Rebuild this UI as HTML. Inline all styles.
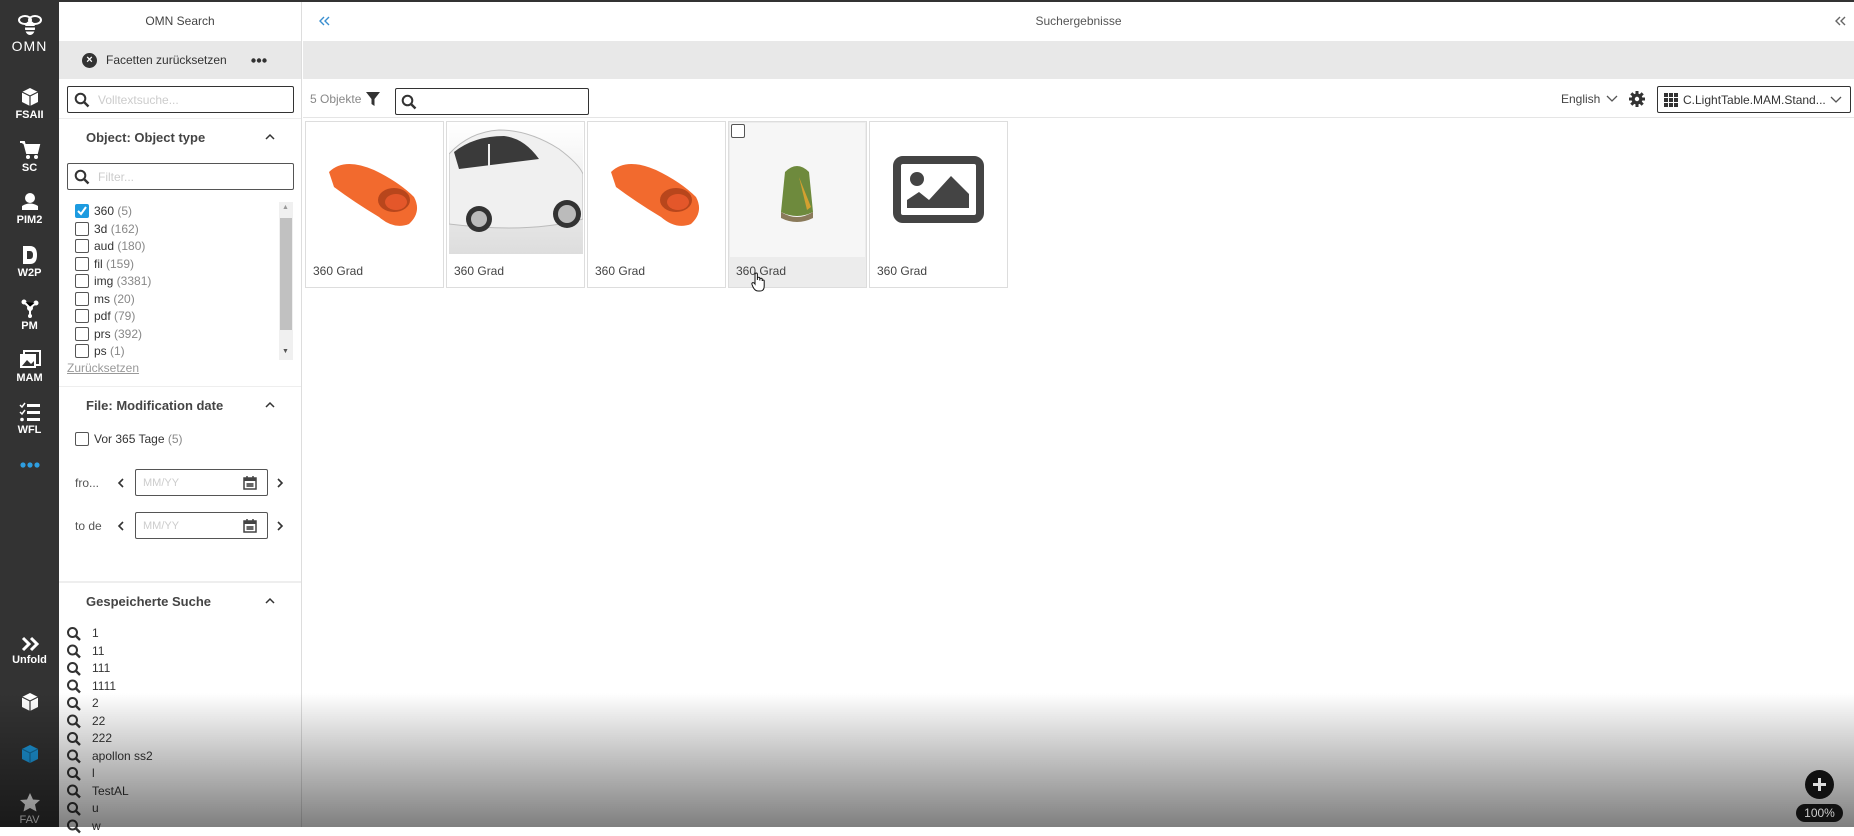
<!DOCTYPE html>
<html><head><meta charset="utf-8"><style>
*{box-sizing:border-box;margin:0;padding:0}
body{width:1854px;height:827px;overflow:hidden;background:#fff;font-family:"Liberation Sans",sans-serif;font-size:13px;color:#333;position:relative}
.abs{position:absolute}
#top{left:0;top:0;width:1854px;height:2px;background:#333}
#side{left:0;top:0;width:59px;height:827px;background:#333;color:#fff;text-align:center;font-weight:bold;font-size:11px}
.nav{position:absolute;left:0;width:59px;text-align:center}
.nav svg{display:block;margin:0 auto 2px}
#panel{left:59px;top:2px;width:243px;height:825px;border-right:1px solid #ddd}
.gray{background:#e8e8e8}
.box{border:1px solid #333;border-radius:2px;background:#fff}
.ph{color:#ccc}
.cb{display:inline-block;width:14px;height:14px;border:1px solid #555;border-radius:2px;vertical-align:-3px;margin-right:5px;background:#fff;overflow:hidden;line-height:0}
.cnt{color:#888}
.hd{font-weight:bold;font-size:13px;color:#444}
.tile{position:absolute;top:121px;width:139px;height:167px;border:1px solid #ddd;background:#fff}
.tile .lb{position:absolute;left:7px;top:142px;font-size:12px;color:#444}
</style></head><body>
<div id="top" class="abs"></div>
<div id="side" class="abs">
 <div class="nav" style="top:12px"><svg width="26" height="26" viewBox="0 0 26 26"><ellipse cx="8" cy="8" rx="6" ry="4" fill="none" stroke="#fff" stroke-width="2"/><ellipse cx="18" cy="8" rx="6" ry="4" fill="none" stroke="#fff" stroke-width="2"/><ellipse cx="13" cy="16" rx="5" ry="7" fill="#fff"/><rect x="8" y="14" width="10" height="1.5" fill="#333"/><rect x="8" y="18" width="10" height="1.5" fill="#333"/></svg><div style="font-size:14px;font-weight:normal;letter-spacing:1px;margin-top:-2px">OMN</div></div>
 <div class="nav" style="top:87px"><svg width="20" height="20" viewBox="0 0 20 20"><path d="M10 1 L18 5 L18 15 L10 19 L2 15 L2 5Z" fill="#fff"/><path d="M2 5 L10 9 L18 5 M10 9 V19" stroke="#333" stroke-width="1.2" fill="none"/></svg>FSAII</div>
 <div class="nav" style="top:140px"><svg width="22" height="20" viewBox="0 0 22 20"><path d="M1 2 H5 L8 13 H18 L20 5 H6" fill="#fff" stroke="#fff" stroke-width="2"/><circle cx="9" cy="17" r="2" fill="#fff"/><circle cx="17" cy="17" r="2" fill="#fff"/></svg>SC</div>
 <div class="nav" style="top:192px"><svg width="20" height="20" viewBox="0 0 20 20"><circle cx="10" cy="6" r="5" fill="#fff"/><path d="M2 14 Q10 9 18 14 L18 18 L2 18Z" fill="#fff"/></svg>PIM2</div>
 <div class="nav" style="top:245px"><svg width="18" height="20" viewBox="0 0 18 20"><path d="M2 1 H9 Q16 1 16 10 Q16 19 9 19 H2Z" fill="#fff"/><path d="M6 6 H9 Q12 6 12 10 Q12 14 9 14 H6Z" fill="#333"/></svg>W2P</div>
 <div class="nav" style="top:298px"><svg width="20" height="20" viewBox="0 0 20 20"><circle cx="10" cy="10" r="3" fill="#fff"/><circle cx="4" cy="4" r="2.5" fill="#fff"/><circle cx="16" cy="5" r="2.5" fill="#fff"/><circle cx="10" cy="18" r="2" fill="#fff"/><path d="M4 4L10 10L16 5M10 10V18" stroke="#fff" stroke-width="2"/></svg>PM</div>
 <div class="nav" style="top:350px"><svg width="22" height="20" viewBox="0 0 22 20"><rect x="1" y="4" width="16" height="14" fill="#fff"/><rect x="5" y="1" width="16" height="14" fill="none" stroke="#fff" stroke-width="2"/><path d="M3 16 L8 10 L12 14 L15 11 V16Z" fill="#333"/></svg>MAM</div>
 <div class="nav" style="top:402px"><svg width="22" height="20" viewBox="0 0 22 20"><path d="M1 3 L3 5 L6 1 M1 10 L3 12 L6 8" stroke="#fff" stroke-width="1.5" fill="none"/><rect x="8" y="2" width="13" height="3" fill="#fff"/><rect x="8" y="9" width="13" height="3" fill="#fff"/><rect x="8" y="16" width="13" height="3" fill="#fff"/><circle cx="3" cy="17.5" r="1.8" fill="#fff"/></svg>WFL</div>
 <svg class="abs" style="left:20px;top:462px" width="20" height="6"><circle cx="3" cy="3" r="2.6" fill="#2e9ee0"/><circle cx="10" cy="3" r="2.6" fill="#2e9ee0"/><circle cx="17" cy="3" r="2.6" fill="#2e9ee0"/></svg>
 <div class="nav" style="top:636px"><svg width="20" height="16" viewBox="0 0 20 16"><path d="M3 2L9 8L3 14M11 2L17 8L11 14" stroke="#fff" stroke-width="3" fill="none"/></svg>Unfold</div>
 <div class="nav" style="top:692px"><svg width="20" height="20" viewBox="0 0 20 20"><path d="M10 1 L18 5 L18 15 L10 19 L2 15 L2 5Z" fill="#fff"/><path d="M2 5 L10 9 L18 5 M10 9 V19" stroke="#333" stroke-width="1.2" fill="none"/></svg></div>
 <div class="nav" style="top:744px"><svg width="20" height="20" viewBox="0 0 20 20"><path d="M10 1 L18 5 L18 15 L10 19 L2 15 L2 5Z" fill="#1d9be0"/><path d="M2 5 L10 9 L18 5 M10 9 V19" stroke="#146fa0" stroke-width="1.2" fill="none"/></svg></div>
 <div class="nav" style="top:792px;font-weight:normal"><svg width="22" height="20" viewBox="0 0 22 20"><path d="M11 1 L14 7.5 L21 8 L16 12.5 L17.5 19.5 L11 16 L4.5 19.5 L6 12.5 L1 8 L8 7.5Z" fill="#fff"/></svg>FAV</div>
</div>

<div id="panel" class="abs">
 <div class="abs" style="left:0;top:0;width:242px;height:39px;text-align:center;line-height:39px;font-size:12px;color:#444">OMN Search</div>
 <div class="abs gray" style="left:0;top:39px;width:242px;height:38px"></div>
 <div class="abs" style="left:23px;top:51px;width:15px;height:15px;border-radius:50%;background:#333;color:#fff;font-size:11px;line-height:15px;text-align:center;font-weight:bold">×</div>
 <div class="abs" style="left:47px;top:51px;font-size:12px">Facetten zurücksetzen</div>
 <svg class="abs" style="left:192px;top:56px" width="16" height="5"><circle cx="2.5" cy="2.5" r="2.2" fill="#333"/><circle cx="8" cy="2.5" r="2.2" fill="#333"/><circle cx="13.5" cy="2.5" r="2.2" fill="#333"/></svg>
 <div class="abs box" style="left:8px;top:84px;width:227px;height:27px"><svg class="abs" style="left:6px;top:5px" width="16" height="16" viewBox="0 0 16 16"><circle cx="6.5" cy="6.5" r="4.8" fill="none" stroke="#333" stroke-width="2"/><path d="M10 10 L14.5 14.5" stroke="#333" stroke-width="2.4"/></svg><span class="abs ph" style="left:30px;top:6px;font-size:12px">Volltextsuche...</span></div>
 <div class="abs" style="left:0;top:116px;width:242px;height:1px;background:#eee"></div>
 <div class="abs hd" style="left:27px;top:128px">Object: Object type</div>
 <svg class="abs" style="left:206px;top:131px" width="10" height="7"><path d="M1 6L5 2L9 6" stroke="#333" stroke-width="1.5" fill="none"/></svg>
 <div class="abs box" style="left:8px;top:161px;width:227px;height:27px;border-color:#555"><svg class="abs" style="left:6px;top:5px" width="16" height="16" viewBox="0 0 16 16"><circle cx="6.5" cy="6.5" r="4.8" fill="none" stroke="#333" stroke-width="2"/><path d="M10 10 L14.5 14.5" stroke="#333" stroke-width="2.4"/></svg><span class="abs ph" style="left:30px;top:6px;font-size:12px">Filter...</span></div>
 <div class="abs" style="left:220px;top:200px;width:14px;height:158px;background:#f0f0f0"><div style="position:absolute;left:1px;top:16px;width:12px;height:112px;background:#c1c1c1"></div><div style="position:absolute;left:3px;top:2px;font-size:7px;color:#999">▲</div><div style="position:absolute;left:3px;top:146px;font-size:7px;color:#555">▼</div></div>
 <div class="abs" style="left:16px;top:201px;line-height:17.5px;font-size:12px">
  <div><span class="cb" style="background:#1d9be0;border-color:#1d9be0"><svg width="12" height="12"><path d="M2 6L5 9L10 2" stroke="#fff" stroke-width="2" fill="none"/></svg></span>360 <span class="cnt">(5)</span></div>
  <div><span class="cb"></span>3d <span class="cnt">(162)</span></div>
  <div><span class="cb"></span>aud <span class="cnt">(180)</span></div>
  <div><span class="cb"></span>fil <span class="cnt">(159)</span></div>
  <div><span class="cb"></span>img <span class="cnt">(3381)</span></div>
  <div><span class="cb"></span>ms <span class="cnt">(20)</span></div>
  <div><span class="cb"></span>pdf <span class="cnt">(79)</span></div>
  <div><span class="cb"></span>prs <span class="cnt">(392)</span></div>
  <div><span class="cb"></span>ps <span class="cnt">(1)</span></div>
 </div>
 <div class="abs" style="left:8px;top:359px;font-size:12px;color:#999;text-decoration:underline">Zurücksetzen</div>
 <div class="abs" style="left:0;top:384px;width:242px;height:1px;background:#eee"></div>
 <div class="abs hd" style="left:27px;top:396px">File: Modification date</div>
 <svg class="abs" style="left:206px;top:399px" width="10" height="7"><path d="M1 6L5 2L9 6" stroke="#333" stroke-width="1.5" fill="none"/></svg>
 <div class="abs" style="left:16px;top:430px;font-size:12px"><span class="cb"></span>Vor 365 Tage <span class="cnt">(5)</span></div>
 <div class="abs" style="left:16px;top:474px;font-size:12px;color:#555">fro...</div>
 <div class="abs" style="left:16px;top:517px;font-size:12px;color:#555">to de</div>
 <svg class="abs" style="left:58px;top:476px" width="7" height="10"><path d="M6 1L2 5L6 9" stroke="#333" stroke-width="1.6" fill="none"/></svg>
 <svg class="abs" style="left:58px;top:519px" width="7" height="10"><path d="M6 1L2 5L6 9" stroke="#333" stroke-width="1.6" fill="none"/></svg>
 <svg class="abs" style="left:218px;top:476px" width="7" height="10"><path d="M1 1L5 5L1 9" stroke="#333" stroke-width="1.6" fill="none"/></svg>
 <svg class="abs" style="left:218px;top:519px" width="7" height="10"><path d="M1 1L5 5L1 9" stroke="#333" stroke-width="1.6" fill="none"/></svg>
 <div class="abs box" style="left:76px;top:467px;width:133px;height:27px;border-color:#555"><span class="abs ph" style="left:7px;top:7px;font-size:11px">MM/YY</span><svg class="abs" style="left:107px;top:6px" width="14" height="14" viewBox="0 0 14 14"><rect x="1" y="2" width="12" height="11" fill="none" stroke="#444" stroke-width="1.5"/><rect x="1" y="2" width="12" height="3" fill="#444"/><path d="M4 0V3M10 0V3" stroke="#444" stroke-width="1.5"/><rect x="3.5" y="7" width="7" height="4" fill="#666"/></svg></div>
 <div class="abs box" style="left:76px;top:510px;width:133px;height:27px;border-color:#555"><span class="abs ph" style="left:7px;top:7px;font-size:11px">MM/YY</span><svg class="abs" style="left:107px;top:6px" width="14" height="14" viewBox="0 0 14 14"><rect x="1" y="2" width="12" height="11" fill="none" stroke="#444" stroke-width="1.5"/><rect x="1" y="2" width="12" height="3" fill="#444"/><path d="M4 0V3M10 0V3" stroke="#444" stroke-width="1.5"/><rect x="3.5" y="7" width="7" height="4" fill="#666"/></svg></div>
 <div class="abs" style="left:0;top:579px;width:242px;height:2px;background:#eee"></div>
 <div class="abs hd" style="left:27px;top:592px">Gespeicherte Suche</div>
 <svg class="abs" style="left:206px;top:595px" width="10" height="7"><path d="M1 6L5 2L9 6" stroke="#333" stroke-width="1.5" fill="none"/></svg>
</div>
<div class="abs" style="left:92px;top:625px;line-height:17.5px;font-size:12px;color:#333">
 <div>1</div><div>11</div><div>111</div><div>1111</div><div>2</div><div>22</div><div>222</div><div>apollon ss2</div><div>l</div><div>TestAL</div><div>u</div><div>w</div>
</div>
<svg class="abs" style="left:66px;top:626px" width="16" height="210">
 <defs><g id="mg"><circle cx="6.5" cy="6.5" r="4.5" fill="none" stroke="#333" stroke-width="2"/><path d="M10 10 L14 14" stroke="#333" stroke-width="2.4"/></g></defs>
 <use href="#mg" y="0"/><use href="#mg" y="17.5"/><use href="#mg" y="35"/><use href="#mg" y="52.5"/><use href="#mg" y="70"/><use href="#mg" y="87.5"/><use href="#mg" y="105"/><use href="#mg" y="122.5"/><use href="#mg" y="140"/><use href="#mg" y="157.5"/><use href="#mg" y="175"/><use href="#mg" y="192.5"/>
</svg>

<!-- main -->
<div class="abs" style="left:303px;top:2px;width:1551px;height:39px;text-align:center;line-height:39px;font-size:12px;color:#555">Suchergebnisse</div>
<svg class="abs" style="left:319px;top:16px" width="11" height="10"><path d="M5 1L1 5L5 9M10 1L6 5L10 9" stroke="#3a8fd0" stroke-width="1.4" fill="none"/></svg>
<svg class="abs" style="left:1835px;top:16px" width="11" height="10"><path d="M5 1L1 5L5 9M10 1L6 5L10 9" stroke="#666" stroke-width="1.4" fill="none"/></svg>
<div class="abs gray" style="left:303px;top:41px;width:1551px;height:38px"></div>
<div class="abs" style="left:310px;top:92px;font-size:12px;color:#888">5 Objekte</div>
<svg class="abs" style="left:366px;top:91px" width="14" height="16" viewBox="0 0 14 16"><path d="M0 1H14L8.5 8V15L5.5 13V8Z" fill="#333"/></svg>
<div class="abs box" style="left:395px;top:88px;width:194px;height:27px"><svg class="abs" style="left:5px;top:5px" width="16" height="16" viewBox="0 0 16 16"><circle cx="6.5" cy="6.5" r="4.8" fill="none" stroke="#333" stroke-width="2"/><path d="M10 10 L14.5 14.5" stroke="#333" stroke-width="2.4"/></svg></div>
<div class="abs" style="left:1561px;top:92px;font-size:12px;color:#444">English</div>
<svg class="abs" style="left:1606px;top:95px" width="12" height="8"><path d="M1 1L6 6L11 1" stroke="#555" fill="none" stroke-width="1.3"/></svg>
<svg class="abs" style="left:1629px;top:91px" width="16" height="16" viewBox="0 0 16 16"><circle cx="8" cy="8" r="5.5" fill="#333"/><g stroke="#333" stroke-width="3"><path d="M8 0V16M0 8H16M2.3 2.3L13.7 13.7M13.7 2.3L2.3 13.7"/></g><circle cx="8" cy="8" r="2.2" fill="#fff"/></svg>
<div class="abs box" style="left:1657px;top:86px;width:194px;height:27px"><svg class="abs" style="left:6px;top:6px" width="15" height="14"><g fill="#333"><rect x="0" y="0" width="4" height="4"/><rect x="5" y="0" width="4" height="4"/><rect x="10" y="0" width="4" height="4"/><rect x="0" y="5" width="4" height="4"/><rect x="5" y="5" width="4" height="4"/><rect x="10" y="5" width="4" height="4"/><rect x="0" y="10" width="4" height="4"/><rect x="5" y="10" width="4" height="4"/><rect x="10" y="10" width="4" height="4"/></g></svg><span class="abs" style="left:25px;top:6px;font-size:12px;color:#333">C.LightTable.MAM.Stand...</span><svg class="abs" style="left:172px;top:9px" width="12" height="8"><path d="M1 1L6 6L11 1" stroke="#555" fill="none" stroke-width="1.3"/></svg></div>
<div class="abs" style="left:303px;top:117px;width:1551px;height:1px;background:#e5e5e5"></div>

<div class="tile" style="left:305px"><svg class="abs" style="left:18px;top:30px" width="100" height="80" viewBox="0 0 100 80"><path d="M5 20 Q20 5 50 18 Q75 30 90 45 Q98 60 85 72 Q70 78 55 65 Q30 50 10 35 Z" fill="#f26a2e"/><ellipse cx="70" cy="48" rx="16" ry="12" fill="#b8461c"/><ellipse cx="72" cy="50" rx="11" ry="8" fill="#e4572a"/></svg><div class="lb">360 Grad</div></div>
<div class="tile" style="left:446px"><svg class="abs" style="left:2px;top:2px" width="134" height="130" viewBox="0 0 134 130"><defs><linearGradient id="sh" x1="0" y1="0" x2="0" y2="1"><stop offset="0" stop-color="#fff"/><stop offset="1" stop-color="#ddd"/></linearGradient></defs><rect width="134" height="130" fill="url(#sh)"/><path d="M0 30 Q20 8 50 6 Q80 6 110 25 Q130 40 134 50 V95 Q80 110 0 100Z" fill="#f0f0f0" stroke="#bbb"/><path d="M5 28 Q25 12 55 12 Q75 14 90 35 L10 45Z" fill="#3a3a3a"/><path d="M40 20 V45" stroke="#eee" stroke-width="2"/><circle cx="30" cy="95" r="13" fill="#333"/><circle cx="30" cy="95" r="8" fill="#bbb"/><circle cx="118" cy="90" r="14" fill="#333"/><circle cx="118" cy="90" r="9" fill="#bbb"/></svg><div class="lb">360 Grad</div></div>
<div class="tile" style="left:587px"><svg class="abs" style="left:18px;top:30px" width="100" height="80" viewBox="0 0 100 80"><path d="M5 20 Q20 5 50 18 Q75 30 90 45 Q98 60 85 72 Q70 78 55 65 Q30 50 10 35 Z" fill="#f26a2e"/><ellipse cx="70" cy="48" rx="16" ry="12" fill="#b8461c"/><ellipse cx="72" cy="50" rx="11" ry="8" fill="#e4572a"/></svg><div class="lb">360 Grad</div></div>
<div class="tile" style="left:728px;background:#ececec"><div class="abs" style="left:1px;top:1px;width:135px;height:134px;background:#f6f6f6"></div><div class="abs" style="left:2px;top:2px;width:14px;height:14px;border:1px solid #555;background:#fff;border-radius:2px"></div><svg class="abs" style="left:48px;top:40px" width="40" height="65" viewBox="0 0 40 65"><path d="M8 10 Q20 -2 32 10 L36 50 Q20 58 4 50Z" fill="#6e8a3d"/><path d="M22 15 L34 45 L30 48Z" fill="#d4a030"/><path d="M4 50 Q20 60 36 50 L36 56 Q20 64 4 56Z" fill="#8a7a5a"/></svg><div class="lb">360 Grad</div><svg class="abs" style="left:22px;top:150px" width="14" height="20" viewBox="0 0 14 20"><path d="M4 10 V2.5 Q4 1 5.2 1 Q6.4 1 6.4 2.5 V8 V6.5 Q6.4 5.3 7.6 5.3 Q8.8 5.3 8.8 6.5 V8.5 V7.3 Q8.8 6.2 10 6.2 Q11.2 6.2 11.2 7.3 V9 Q11.2 8 12.2 8 Q13.2 8 13.2 9 V14 Q13.2 19 9 19 H7 Q4 19 2 15 L1 12.5 Q0.5 11 1.8 10.6 Q3 10.4 4 12Z" fill="#fff" stroke="#111" stroke-width="1"/></svg></div>
<div class="tile" style="left:869px"><svg class="abs" style="left:23px;top:34px" width="91" height="67" viewBox="0 0 91 67"><rect x="4" y="4" width="83" height="59" rx="6" fill="none" stroke="#444" stroke-width="8"/><circle cx="24" cy="23" r="7" fill="#444"/><path d="M14 52 L14 44 L26 36 L36 44 L58 20 L76 38 L76 52Z" fill="#444"/></svg><div class="lb">360 Grad</div></div>

<div class="abs" style="left:0;top:693px;width:1854px;height:134px;background:linear-gradient(to bottom,rgba(0,0,0,0),rgba(0,0,0,0.5));pointer-events:none"></div>
<div class="abs" style="left:1805px;top:770px;width:29px;height:29px;border-radius:50%;background:#111"><svg class="abs" style="left:7px;top:7px" width="15" height="15"><path d="M7.5 1V14M1 7.5H14" stroke="#ddd" stroke-width="3"/></svg></div>
<div class="abs" style="left:1796px;top:804px;width:47px;height:18px;border-radius:9px;background:#111;color:#ccc;font-size:12px;line-height:18px;text-align:center">100%</div>
</body></html>
